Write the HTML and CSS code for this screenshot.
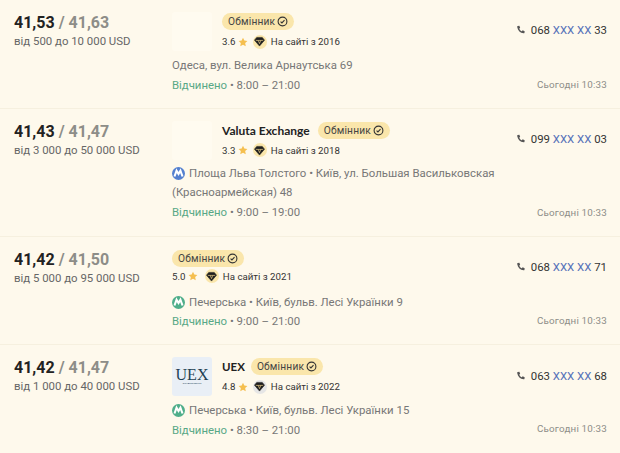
FILE: index.html
```html
<!DOCTYPE html>
<html lang="uk">
<head>
<meta charset="utf-8">
<title>Обмінники</title>
<link rel="stylesheet" href="styles.css">
</head>
<body>
<svg class="defs" width="0" height="0" aria-hidden="true">
  <defs>
    <symbol id="check" viewBox="0 0 12 12"><circle cx="6" cy="6" r="4.800" fill="none" stroke="currentColor" stroke-width="1.200"/><path d="M3.900 6.100l1.500 1.500 2.800-3" fill="none" stroke="currentColor" stroke-width="1.200"/></symbol>
    <symbol id="star" viewBox="0 0 12 12"><path d="M6 .8l1.600 3.400 3.700.5-2.700 2.600.7 3.700L6 9.200 2.700 11l.7-3.700L.7 4.700l3.700-.5z" fill="#f5bf4f"/></symbol>
    <symbol id="gem" viewBox="0 0 12 12"><path d="M3 1.500h6l2.500 3L6 11 .5 4.500z" fill="#1f1f1f" stroke="#1f1f1f" stroke-width=".6" stroke-linejoin="round"/><path d="M2 4.800h8M4.600 4.800 6 8.300M7.400 4.800 6 8.300" stroke="#f7d98f" stroke-width=".7" fill="none"/></symbol>
    <symbol id="phone" viewBox="0 0 12 12"><path d="M2.200 1.200 4 1l1 2.400-1.100 1c.6 1.400 1.700 2.500 3.100 3.100l1-1.100 2.400 1-.2 1.800c-.1.6-.6.9-1.100.8C5 9.600 2.300 6.900 1.400 2.300c-.1-.5.2-1 .8-1.100z" fill="currentColor"/></symbol>
    <symbol id="metro" viewBox="0 0 12 12"><circle cx="6" cy="6" r="6" fill="currentColor"/><path d="M2.300 8.800 4.200 3.400 6 6.500 7.800 3.400 9.700 8.800" fill="none" stroke="#fff" stroke-width="1.900"/></symbol>
  </defs>
</svg>

<main class="list">
  <article class="row row-a">
    <div class="rates">
      <div class="rate"><b>41,53</b> <span>/ 41,63</span></div>
      <div class="limit">від 500 до 10 000 USD</div>
    </div>
    <div class="info">
      <div class="head">
        <div class="logo"></div>
        <div class="meta">
          <div class="title"><span class="tag">Обмінник <svg class="ico-check"><use href="#check"/></svg></span></div>
          <div class="sub">3.6 <svg class="ico-star"><use href="#star"/></svg><span class="gem"><svg class="ico-gem"><use href="#gem"/></svg></span>На сайті з 2016</div>
        </div>
      </div>
      <div class="addr">Одеса, вул. Велика Арнаутська 69</div>
      <div class="hours"><em>Відчинено</em> • 8:00 – 21:00</div>
    </div>
    <div class="side">
      <div class="tel"><svg class="ico-phone"><use href="#phone"/></svg>068 <i>XXX XX</i> 33</div>
      <div class="time">Сьогодні 10:33</div>
    </div>
  </article>

  <article class="row row-b">
    <div class="rates">
      <div class="rate"><b>41,43</b> <span>/ 41,47</span></div>
      <div class="limit">від 3 000 до 50 000 USD</div>
    </div>
    <div class="info">
      <div class="head">
        <div class="logo"></div>
        <div class="meta">
          <div class="title"><strong>Valuta Exchange</strong><span class="tag">Обмінник <svg class="ico-check"><use href="#check"/></svg></span></div>
          <div class="sub">3.3 <svg class="ico-star"><use href="#star"/></svg><span class="gem"><svg class="ico-gem"><use href="#gem"/></svg></span>На сайті з 2018</div>
        </div>
      </div>
      <div class="addr"><svg class="ico-metro blue"><use href="#metro"/></svg>Площа Льва Толстого • Київ, ул. Большая Васильковская (Красноармейская) 48</div>
      <div class="hours"><em>Відчинено</em> • 9:00 – 19:00</div>
    </div>
    <div class="side">
      <div class="tel"><svg class="ico-phone"><use href="#phone"/></svg>099 <i>XXX XX</i> 03</div>
      <div class="time">Сьогодні 10:33</div>
    </div>
  </article>

  <article class="row row-c">
    <div class="rates">
      <div class="rate"><b>41,42</b> <span>/ 41,50</span></div>
      <div class="limit">від 5 000 до 95 000 USD</div>
    </div>
    <div class="info">
      <div class="head">
        <div class="meta">
          <div class="title"><span class="tag">Обмінник <svg class="ico-check"><use href="#check"/></svg></span></div>
          <div class="sub">5.0 <svg class="ico-star"><use href="#star"/></svg><span class="gem"><svg class="ico-gem"><use href="#gem"/></svg></span>На сайті з 2021</div>
        </div>
      </div>
      <div class="addr"><svg class="ico-metro green"><use href="#metro"/></svg>Печерська • Київ, бульв. Лесі Українки 9</div>
      <div class="hours"><em>Відчинено</em> • 9:00 – 21:00</div>
    </div>
    <div class="side">
      <div class="tel"><svg class="ico-phone"><use href="#phone"/></svg>068 <i>XXX XX</i> 71</div>
      <div class="time">Сьогодні 10:33</div>
    </div>
  </article>

  <article class="row row-d">
    <div class="rates">
      <div class="rate"><b>41,42</b> <span>/ 41,47</span></div>
      <div class="limit">від 1 000 до 40 000 USD</div>
    </div>
    <div class="info">
      <div class="head">
        <div class="logo logo-uex"><span class="uex">UEX</span><span class="uex-sub">EXCHANGE SERVICE</span></div>
        <div class="meta">
          <div class="title"><strong>UEX</strong><span class="tag">Обмінник <svg class="ico-check"><use href="#check"/></svg></span></div>
          <div class="sub">4.8 <svg class="ico-star"><use href="#star"/></svg><span class="gem gem-grey"><svg class="ico-gem"><use href="#gem"/></svg></span>На сайті з 2022</div>
        </div>
      </div>
      <div class="addr"><svg class="ico-metro green"><use href="#metro"/></svg>Печерська • Київ, бульв. Лесі Українки 15</div>
      <div class="hours"><em>Відчинено</em> • 8:30 – 21:00</div>
    </div>
    <div class="side">
      <div class="tel"><svg class="ico-phone"><use href="#phone"/></svg>063 <i>XXX XX</i> 68</div>
      <div class="time">Сьогодні 10:33</div>
    </div>
  </article>
</main>
</body>
</html>
```
FILE: styles.css
```css
* { box-sizing: border-box; }
html, body { margin: 0; padding: 0; }
body {
  width: 620px;
  height: 453px;
  overflow: hidden;
  background: #fef9ec;
  font-family: Roboto, "Liberation Sans", sans-serif;
  color: #2b2b2b;
}
.defs { display: block; height: 0; }
.list { display: flex; flex-direction: column; }
.row {
  display: grid;
  grid-template-columns: 158px 335px 1fr;
  padding: 12px 13px 0 14px;
  border-bottom: 1px solid #f6f0df;
  height: 108.500px;
}
.row-b { height: 128px; }
.row-d { border-bottom: 0; }

.rates { padding-top: 1px; }
.rate { font-size: 16px; line-height: 20px; font-weight: 700; color: #222; }
.rate span { color: #8d8d88; }
.rate b { font-weight: 700; }
.limit { font-size: 11.400px; line-height: 17px; color: #666; }

.info { display: flex; flex-direction: column; }
.head { display: flex; gap: 10px; height: 39px; }
.logo { width: 40px; height: 39px; background: #fffbf0; border-radius: 3px; flex: none; }
.logo-uex {
  background: #e9eff6;
  display: flex;
  flex-direction: column;
  align-items: center;
  justify-content: center;
}
.uex {
  font-family: "Liberation Serif", serif;
  font-size: 16px;
  line-height: 13px;
  color: #1d3f52;
}
.uex-sub { font-size: 2px; line-height: 4px; color: #1d3f52; }

.meta { display: flex; flex-direction: column; }
.title { display: flex; align-items: center; gap: 8px; height: 19px; margin-bottom: 1px; }
.title strong { font-family: Lato, sans-serif; font-size: 12px; font-weight: 700; color: #222; }
.row-d .title { gap: 6px; }
.row-d .title strong { font-size: 11.500px; }
.tag {
  display: inline-flex;
  align-items: center;
  gap: 2px;
  height: 17px;
  padding: 0 6px;
  border-radius: 9px;
  background: #fae6ab;
  font-size: 10.200px;
  letter-spacing: .2px;
  color: #444;
  white-space: nowrap;
}
.ico-check { width: 11px; height: 11px; color: #333; }
.sub { display: flex; align-items: center; height: 19px; font-size: 9.700px; color: #333; white-space: pre; }
.row-c .title { margin-bottom: 0; }
.row-c .sub { height: 17px; }
.ico-star { width: 10px; height: 10px; }
.gem {
  width: 14px;
  height: 14px;
  margin: 0 4px 0 5px;
  border-radius: 50%;
  background: #fae6ab;
  display: flex;
  align-items: center;
  justify-content: center;
}
.row-c .gem { margin-left: 7px; }
.gem-grey { background: #e6e6e6; }
.ico-gem { width: 11px; height: 11px; }

.addr { margin-top: 5px; font-size: 11.400px; line-height: 19.500px; color: #777; }
.row-b .addr { margin-top: 4px; }
.ico-metro { width: 13px; height: 13px; margin-right: 4px; vertical-align: -3px; }
.blue { color: #5480cf; }
.green { color: #4fae8a; }
.hours { font-size: 11.400px; line-height: 19.500px; color: #777; }
.hours em { font-style: normal; color: #58a886; }

.side { display: flex; flex-direction: column; align-items: flex-end; }
.tel { margin-top: 9px; font-size: 11.400px; line-height: 18px; color: #333; display: flex; align-items: center; white-space: pre; }
.tel i { font-style: normal; color: #5470b8; }
.ico-phone { width: 10px; height: 10px; margin-right: 5px; color: #555; }
.time { margin-top: auto; margin-bottom: 16px; font-size: 9.800px; letter-spacing: .2px; line-height: 14px; color: #8d8d88; }
.row-d .tel { margin-top: 10px; }
.row-d .time { margin-bottom: 18px; }
```
